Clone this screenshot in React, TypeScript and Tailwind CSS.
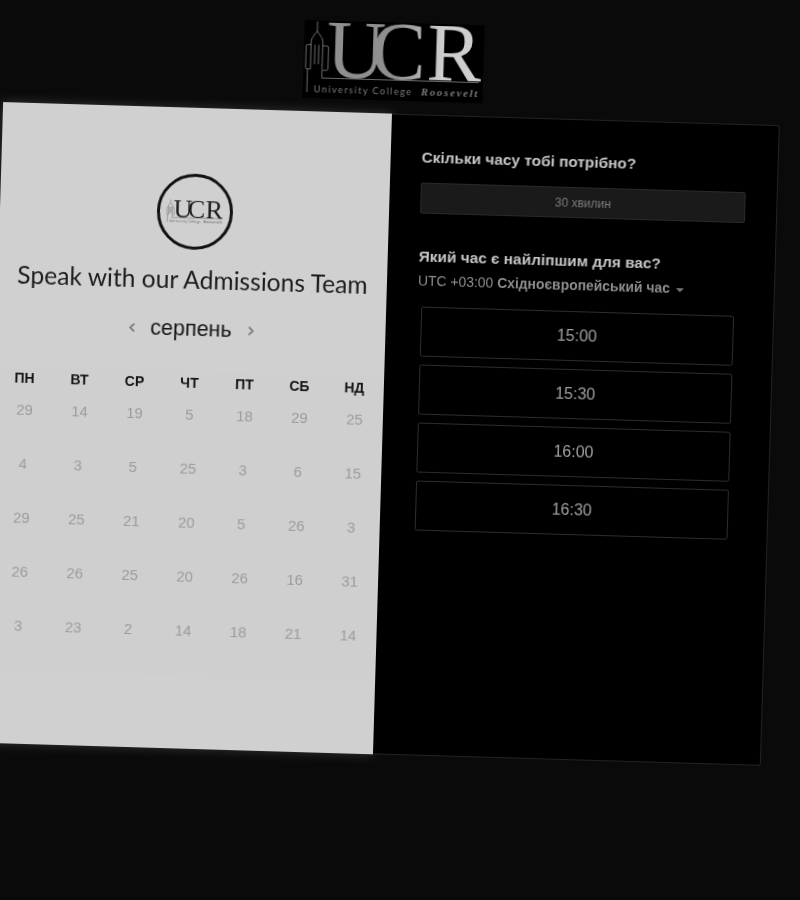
const weekdays = ['пн', 'вт', 'ср', 'чт', 'пт', 'сб', 'нд'];

const days = [
  [29, 14, 19, 5, 18, 29, 25],
  [4, 3, 5, 25, 3, 6, 15],
  [29, 25, 21, 20, 5, 26, 3],
  [26, 26, 25, 20, 26, 16, 31],
  [3, 23, 2, 14, 18, 21, 14],
];

const slots = ['15:00', '15:30', '16:00', '16:30'];

function Logo({ dark = false, className }: { dark?: boolean; className: string }) {
  const tower = dark ? '#808080' : '#7a7a7a';
  const left = dark ? '#1c1c1c' : '#8f8f8f';
  const right = dark ? '#1c1c1c' : '#cfcfcf';
  const small = dark ? '#5c5c5c' : '#7c7c7c';
  return (
    <svg viewBox="0 0 180 80" className={`overflow-visible ${className}`}>
      <path
        d="M11 1V11L6 18L5 22V50M11 11L16 18L17 22V50M9 25V45M13 25V45M5 25H1.5Q0 25 0 27V49Q0 50 2 50H5M17 26H21Q23 26 23 28V50Q23 51 21 51H17M2 50V74M17 51V59H178"
        fill="none"
        stroke={tower}
        strokeWidth={dark ? 2 : 0.9}
      />
      <defs>
        <linearGradient id={dark ? 'ucr-dark' : 'ucr-light'} x1="0" x2="1" y1="0" y2="0">
          <stop offset="0.45" stopColor={left} />
          <stop offset="0.75" stopColor={right} />
        </linearGradient>
      </defs>
      <text
        x="21 67 124"
        y="57"
        fill={`url(#${dark ? 'ucr-dark' : 'ucr-light'})`}
        fontFamily="'Liberation Serif', serif"
        fontSize="84"
      >
        UCR
      </text>
      <text x="9" y="74" fill={small} fontFamily="'Lato', sans-serif" fontSize="9.5" textLength="100">
        University College
      </text>
      <text
        x="119"
        y="74"
        fill={small}
        fontFamily="'Liberation Serif', serif"
        fontSize="11"
        fontStyle="italic"
        fontWeight="700"
        textLength="58"
      >
        Roosevelt
      </text>
    </svg>
  );
}

function Chevron({ flip = false }: { flip?: boolean }) {
  return (
    <svg viewBox="0 0 8 12" className={`h-[11px] w-[7px] ${flip ? 'rotate-180' : ''}`}>
      <path d="M6.5 1.5L2 6L6.5 10.5" fill="none" stroke="#777" strokeWidth="2" />
    </svg>
  );
}

function Calendar() {
  return (
    <div className="flex h-[641px] w-[389px] shrink-0 flex-col items-center bg-[#d0d0d0] pt-[66px] shadow-[0_0_10px_rgba(255,255,255,0.18)]">
      <div className="flex h-[76px] w-[76px] items-center justify-center rounded-full border-[3px] border-[#111]">
        <Logo dark className="w-[56px]" />
      </div>
      <h1 className="mt-[14px] font-['Lato',sans-serif] text-[24.6px] leading-[32px] whitespace-nowrap text-[#1c1c1c]">
        Speak with our Admissions Team
      </h1>
      <div className="mt-[19px] flex h-[28px] w-[126px] items-center justify-between font-['Liberation_Sans',sans-serif]">
        <Chevron />
        <span className="text-[21.5px] leading-[28px] text-[#141414]">серпень</span>
        <Chevron flip />
      </div>
      <div className="mt-[28px] grid w-[385px] grid-cols-7 bg-[#cfcfcf] pb-[19px] font-['Liberation_Sans',sans-serif]">
        {weekdays.map((day) => (
          <div key={day} className="-mb-[7px] flex h-[24px] items-center justify-center text-[14px] font-bold text-[#151515] uppercase">
            {day}
          </div>
        ))}
        {days.flat().map((day, index) => (
          <div key={index} className="flex h-[54px] items-center justify-center pl-[2px] text-[15px] text-[#9c9c9c]">
            {day}
          </div>
        ))}
      </div>
    </div>
  );
}

function TimePicker() {
  return (
    <div className="flex h-[641px] w-[388px] shrink-0 flex-col rounded-r-[3px] border-t border-r border-b border-[#222] bg-black pt-[32px] pl-[31px] font-['Liberation_Sans',sans-serif]">
      <h2 className="text-[15.4px] leading-[20px] font-bold text-[#c6c6c6]">Скільки часу тобі потрібно?</h2>
      <div className="mt-[15px] flex h-[31px] w-[325px] items-center justify-center rounded-[2px] border border-[#2b2b2b] bg-[#1a1a1a] text-[12px] text-[#7c7c7c]">
        30 хвилин
      </div>
      <h2 className="mt-[33px] text-[15.4px] leading-[20px] font-bold text-[#c6c6c6]">Який час є найліпшим для вас?</h2>
      <p className="mt-[5px] flex items-center text-[13.9px] leading-[18px] text-[#8c8c8c]">
        UTC +03:00&nbsp;<span className="font-bold">Східноєвропейський час</span>
        <span className="mt-[3px] ml-[6px] h-0 w-0 border-x-[4px] border-t-[4px] border-x-transparent border-t-[#777]" />
      </p>
      <div className="mt-[17px] ml-[4px] flex w-[313px] flex-col gap-[8px]">
        {slots.map((slot) => (
          <div key={slot} className="flex h-[50px] items-center justify-center rounded-[2px] border border-[#2e2e2e] text-[16px] text-[#a0a0a0]">
            {slot}
          </div>
        ))}
      </div>
    </div>
  );
}

export default function App() {
  return (
    <div className="h-[900px] w-[800px] overflow-hidden bg-[#0a0a0a]">
      <div className="mt-[14px] -ml-[7px] flex w-[777px] origin-[407px_436px] rotate-[1.7deg] flex-col items-center pt-[9px] blur-[0.4px]">
        <div className="mb-[13px] h-[78px] w-[180px] bg-black">
          <Logo className="h-full w-full" />
        </div>
        <div className="flex w-[777px]">
          <Calendar />
          <TimePicker />
        </div>
      </div>
    </div>
  );
}
